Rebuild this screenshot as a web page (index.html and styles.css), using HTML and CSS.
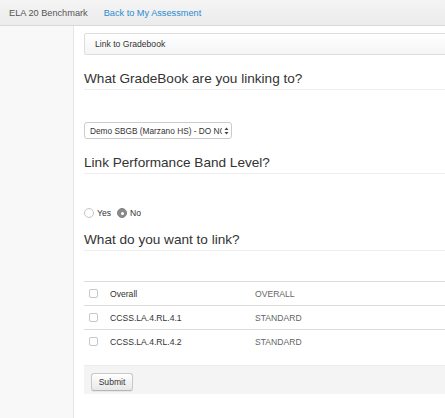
FILE: index.html
```html
<!DOCTYPE html>
<html>
<head>
<meta charset="utf-8">
<link rel="stylesheet" href="styles.css">
</head>
<body>
<div class="navbar">
  <span class="brand">ELA 20 Benchmark</span>
  <a class="navlink" href="#">Back to My Assessment</a>
</div>
<div class="layout">
  <div class="sidebar"></div>
  <div class="main">
    <div class="panel">Link to Gradebook</div>
    <h2 class="heading h1">What GradeBook are you linking to?</h2>
    <div class="select">
      <span class="select-text">Demo SBGB (Marzano HS) - DO NOT USE</span>
      <svg class="select-arrow" width="5" height="8" viewBox="0 0 5 8"><path d="M2.5 0.5 L4.5 3 L0.5 3 Z M2.5 7.5 L4.5 5 L0.5 5 Z" fill="#444"/></svg>
    </div>
    <h2 class="heading h2">Link Performance Band Level?</h2>
    <div class="radios">
      <span class="radio"></span><span class="rlabel">Yes</span>
      <span class="radio checked"></span><span class="rlabel">No</span>
    </div>
    <h2 class="heading h3">What do you want to link?</h2>
    <div class="table">
      <div class="row"><span class="cb"></span><span class="name">Overall</span><span class="type">OVERALL</span></div>
      <div class="row"><span class="cb"></span><span class="name">CCSS.LA.4.RL.4.1</span><span class="type">STANDARD</span></div>
      <div class="row"><span class="cb"></span><span class="name">CCSS.LA.4.RL.4.2</span><span class="type">STANDARD</span></div>
    </div>
    <div class="actions"><button class="btn">Submit</button></div>
  </div>
</div>
</body>
</html>
```
FILE: styles.css
```css
html, body {
  margin: 0;
  padding: 0;
  width: 445px;
  height: 418px;
  overflow: hidden;
  background: #fff;
  font-family: "Liberation Sans", Arial, Helvetica, sans-serif;
  color: #333;
}
.navbar {
  height: 25px;
  border-bottom: 1px solid #d8d8d8;
  background: linear-gradient(#f4f4f4, #ececec);
  display: flex;
  align-items: center;
  font-size: 9.2px;
  padding-left: 9px;
}
.brand {
  color: #555;
}
.navlink {
  color: #2a8bd0;
  text-decoration: none;
  margin-left: 16px;
}
.layout {
  display: flex;
  height: 392px;
}
.sidebar {
  width: 73px;
  flex: none;
  background: #f8f8f8;
  border-right: 1px solid #e6e6e6;
}
.main {
  padding-left: 10px;
  width: 500px;
  flex: none;
}
.panel {
  margin-top: 7px;
  height: 20px;
  border: 1px solid #dedede;
  border-radius: 2px;
  background: linear-gradient(#ffffff, #f5f5f5);
  font-size: 8.6px;
  line-height: 20px;
  padding-left: 10px;
  color: #333;
}
.heading {
  margin: 16px 0 0 0;
  font-size: 13.6px;
  font-weight: normal;
  line-height: 16px;
  padding-bottom: 2px;
  border-bottom: 1px solid #eeeeee;
  color: #333;
}
.select {
  margin-top: 32px;
  width: 146px;
  height: 15px;
  border: 1px solid #cccccc;
  border-radius: 3px;
  background: #fff;
  display: flex;
  align-items: center;
  font-size: 8.3px;
  overflow: hidden;
}
.select-text {
  padding-left: 5px;
  white-space: nowrap;
  width: 132px;
  overflow: hidden;
  flex: none;
}
.select-arrow {
  margin-left: 2px;
  flex: none;
}
.radios {
  margin-top: 33px;
  height: 12px;
  display: flex;
  align-items: center;
  font-size: 8.6px;
}
.radio {
  width: 8px;
  height: 8px;
  border: 1px solid #c4c4c4;
  border-radius: 50%;
  background: #fff;
  box-sizing: content-box;
  flex: none;
}
.radio.checked {
  background: #8a8a8a;
  border-color: #808080;
  position: relative;
}
.radio.checked::after {
  content: "";
  position: absolute;
  left: 2.5px;
  top: 2.5px;
  width: 3px;
  height: 3px;
  border-radius: 50%;
  background: #fff;
}
.rlabel {
  margin-left: 3px;
  margin-right: 6px;
}
.h3 {
  margin-top: 13px;
}
.table {
  margin-top: 30px;
}
.row {
  height: 23px;
  border-top: 1px solid #dddddd;
  display: flex;
  align-items: center;
  font-size: 8.6px;
}
.cb {
  width: 7px;
  height: 7px;
  border: 1px solid #c8c8c8;
  border-radius: 2px;
  margin-left: 5px;
  background: #fff;
  flex: none;
}
.name {
  margin-left: 12px;
  width: 145px;
  flex: none;
  color: #333;
}
.type {
  color: #666;
}
.actions {
  margin-top: 12px;
  height: 29px;
  background: #f4f4f4;
  border-top: 1px solid #ececec;
  box-sizing: border-box;
  padding: 5px 0 0 7px;
}
.btn {
  height: 18px;
  width: 42px;
  padding: 0;
  border: 1px solid #c8c8c8;
  border-bottom-color: #b5b5b5;
  border-radius: 3px;
  background: linear-gradient(#ffffff, #e8e8e8);
  box-shadow: 0 1px 1px rgba(0,0,0,0.06);
  font-family: "Liberation Sans", Arial, sans-serif;
  font-size: 8.6px;
  color: #333;
}
```
